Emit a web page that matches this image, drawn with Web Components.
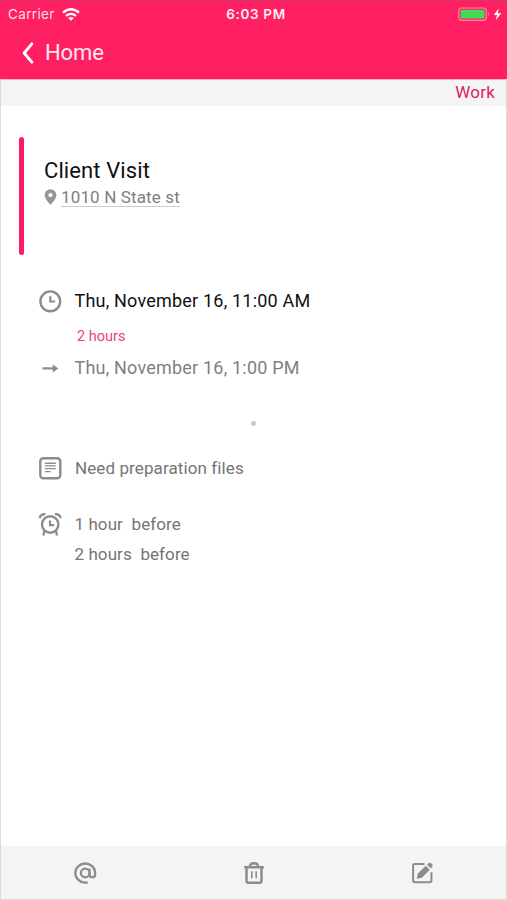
<!DOCTYPE html>
<html lang="en">
<head>
<meta charset="utf-8">
<title>Client Visit</title>
<style>
html,body{margin:0;height:900px;overflow:hidden;background:#fff}
body{font-family:Roboto,"Liberation Sans",sans-serif;color:#757575}
</style>
</head>
<body>
<event-screen></event-screen>
<script>
const define = (name, html) => customElements.define(name, class extends HTMLElement {
  constructor() {
    super();
    const t = document.createElement('template');
    t.innerHTML = html;
    this.attachShadow({mode: 'open'}).append(t.content.cloneNode(true));
  }
});

define('status-bar', `
<style>
:host{display:grid;grid-template-columns:1fr auto 1fr;align-items:center;height:28px;padding:0 4px 2px 7px;color:#fff;
  font:400 13.5px/26px Inter,"Liberation Sans",sans-serif;box-sizing:border-box}
.left{display:flex;align-items:center;gap:7px;color:#ffdce7}
.carrier{letter-spacing:.35px}
.time{font-weight:600;letter-spacing:.65px;font-size:13.5px;margin-left:1px;color:#fff0f5}
.right{display:flex;justify-content:flex-end;align-items:center}
svg{display:block}
</style>
<div class="left"><span class="carrier">Carrier</span>
<svg width="18" height="13" viewBox="0 0 18 13" fill="none" stroke="#fff" stroke-width="2.3"><path d="M1 4.7Q9-2.2 17 4.7M4 7.9Q9 3.8 14 7.9"/><path d="M6.2 9.9Q9 7.9 11.8 9.9L9 12.7Z" fill="#fff" stroke="none"/></svg></div>
<span class="time">6:03 PM</span>
<div class="right"><svg width="45" height="15" viewBox="0 0 45 15"><rect x=".8" y="1" width="27.5" height="12.4" rx="3" fill="none" stroke="#ff8aae" stroke-width="1.1"/><rect x="2.6" y="2.8" width="24" height="8.8" rx="1.3" fill="#46d856"/><path d="M30.2 5q2.2 2.2 0 4.4z" fill="#ff8aae"/><path d="M40.7 1.5L35.8 8h3.3l-1.4 5.2L43.2 6.2h-3.5z" fill="#fff"/></svg></div>`);

define('nav-bar', `
<style>
:host{display:flex;align-items:center;height:51px;padding:0 0 2px 21px;box-sizing:border-box;gap:11px;color:#ffe6ee;font-size:22px;line-height:25px;letter-spacing:-.1px}
svg{display:block}
</style>
<svg width="12" height="22" viewBox="0 0 12 22" fill="none" stroke="#fff" stroke-width="2.8" stroke-linecap="round" stroke-linejoin="round"><path d="M9.8 1.8L2.2 11L9.8 20.2"/></svg>
<slot></slot>`);

define('tag-strip', `
<style>
:host{display:flex;justify-content:flex-end;align-items:center;height:27px;padding:0 11px 3px 0;background:#f4f4f4;border-top:1px solid #ffadc6;box-sizing:border-box;color:#e0215f;font-size:17px;line-height:20px;letter-spacing:.2px}
</style><slot></slot>`);

define('event-header', `
<style>
:host{display:flex;height:118px;gap:20px;padding-left:18px}
.bar{width:5px;border-radius:3px;background:#fc1c63}
.body{padding-top:20px}
.title{color:#111;font-size:22px;line-height:28px;letter-spacing:.1px}
.place{display:flex;align-items:center;gap:4px;margin-top:2px;color:#808080;font-size:17px;line-height:21px}
.place span{border-bottom:1px solid #ccc;height:19px;line-height:21px;letter-spacing:.14px}
svg{display:block}
</style>
<div class="bar"></div>
<div class="body"><div class="title"><slot name="title"></slot></div>
<div class="place"><svg width="13" height="16" viewBox="0 0 13 16"><path fill="#969696" fill-rule="evenodd" d="M6.5.3a5.9 5.9 0 0 1 5.9 5.9C12.4 10 6.5 15.8 6.5 15.8S.6 10 .6 6.2A5.9 5.9 0 0 1 6.5.3zM6.5 4a2.1 2.1 0 1 0 0 4.2a2.1 2.1 0 0 0 0-4.2z"/></svg><span><slot name="place"></slot></span></div></div>`);

define('detail-row', `
<style>
:host{display:flex;align-items:center;height:30px;padding-left:37px;box-sizing:border-box;font-size:17px;line-height:22px;white-space:pre}
.icon{width:24px;height:24px;margin-right:12.5px;flex:none}
</style><div class="icon"><slot name="icon"></slot></div><slot></slot>`);

const icons = {
  clock: '<circle cx="12.3" cy="12.3" r="9.9" stroke-width="2.4"/><path d="M12.3 7.2v5.3h4.8" stroke-width="2.2"/>',
  arrow: '<path d="M4.5 12.4h13" stroke-width="2.2"/><path d="M14.8 8.3l5.4 4.1-5.4 4.1z" fill="#8c8c8c" stroke="none"/>',
  note: '<rect x="1.3" y="2.3" width="20" height="20" rx="3" stroke-width="2.4"/><path d="M5.8 7.2h11M5.8 9.9h11M5.8 12.6h11M5.8 15.6h6" stroke-width="1.4"/>',
  alarm: '<circle cx="12.2" cy="12.5" r="8.2" stroke-width="2.4"/><path d="M12 8.6v4.5h4.2" stroke-width="2.2"/><path d="M1.6 6Q2.7 2.2 7.4 2M22.8 6Q21.7 2.2 17 2M6.4 18.8L5.4 23.4M18 18.8L19 23.4" stroke-width="2.3"/>',
  at: '<circle cx="11.2" cy="12" r="4.3"/><path d="M15.5 7.6v5.8q0 2.8 2.8 2.8t2.8-2.8V11.5a9.9 9.6 0 1 0-9.9 10.2h2.6" stroke-width="2.3"/>',
  trash: '<path d="M4.5 6.5v13.2q0 2 2 2h11q2 0 2-2v-13.2" stroke-width="2.5"/><path d="M2.2 6.2h19.6M8 5.5V5Q8.2 2.3 12 2.3T16 5v.5" stroke-width="2.5"/><path d="M9.8 10.2v7M14.2 10.2v7" stroke-width="1.6"/>',
  edit: '<g transform="translate(.5 0)"><path d="M14 2.9H4.2Q2.6 2.9 2.6 4.5v15.1q0 1.6 1.6 1.6h15.1q1.6 0 1.6-1.6V11.3" stroke-width="2"/><path d="M6.2 17.7l1.2-5.1L15.3 4.8l4 4-7.9 7.9zM16.5 3.6l1.2-1.2q1.6-1.4 3.2 0l.6.6q1.4 1.6 0 3.2l-1.1 1.2z" fill="#8c8c8c" stroke="none"/></g>'
};
customElements.define('line-icon', class extends HTMLElement {
  constructor() { super(); this.attachShadow({mode: 'open'}); }
  connectedCallback() {
    this.shadowRoot.innerHTML = '<style>:host{display:block;width:24px;height:24px}svg{display:block;overflow:visible}</style>' +
      '<svg width="24" height="24" viewBox="0 0 24 24" fill="none" stroke="#8c8c8c" stroke-width="2.2">' + icons[this.getAttribute('name')] + '</svg>';
  }
});

define('tool-bar', `
<style>
:host{display:grid;grid-template-columns:repeat(3,1fr);place-items:center;height:53px;background:#f4f4f4;box-sizing:border-box;border-top:1px solid #f0f0f0;padding-left:1px}
</style><slot></slot>`);

define('event-screen', `
<style>
:host{display:flex;flex-direction:column;width:507px;height:900px;box-sizing:border-box;border:solid #dcdcdc;border-width:0 1px 1px;background:#fff}
.head{background:#ff2063;margin:0 -1px;border-top:1px solid #d83a69;height:79px;box-sizing:border-box;padding-left:1px}
status-bar{height:27px}
event-header{margin-top:31px}
.details{display:flex;flex-direction:column;flex:1}
.start{margin-top:31px;color:#111;font-size:18px;letter-spacing:.2px}
.dur{color:#ec3f7a;font-size:14.5px;line-height:20px;margin:11px 0 0 76px}
.end{margin-top:6px;font-size:18px;color:#808080;letter-spacing:.2px}
.dot{width:5px;height:5px;border-radius:50%;background:#c8c8c8;align-self:center;margin-top:38px}
.note{margin-top:27px;letter-spacing:.1px;padding-left:37.5px}
.alarm{margin-top:26px;letter-spacing:.08px}
.second{letter-spacing:.08px}
</style>
<div class="head"><status-bar></status-bar><nav-bar>Home</nav-bar></div>
<tag-strip>Work</tag-strip>
<event-header><span slot="title">Client Visit</span><span slot="place">1010 N State st</span></event-header>
<div class="details">
<detail-row class="start"><line-icon slot="icon" name="clock"></line-icon>Thu, November 16, 11:00 AM</detail-row>
<div class="dur">2 hours</div>
<detail-row class="end"><line-icon slot="icon" name="arrow"></line-icon>Thu, November 16, 1:00 PM</detail-row>
<div class="dot"></div>
<detail-row class="note"><line-icon slot="icon" name="note"></line-icon>Need preparation files</detail-row>
<detail-row class="alarm"><line-icon slot="icon" name="alarm"></line-icon>1 hour  before</detail-row>
<detail-row class="second">2 hours  before</detail-row>
</div>
<tool-bar><line-icon name="at"></line-icon><line-icon name="trash"></line-icon><line-icon name="edit"></line-icon></tool-bar>`);
</script>
</body>
</html>
